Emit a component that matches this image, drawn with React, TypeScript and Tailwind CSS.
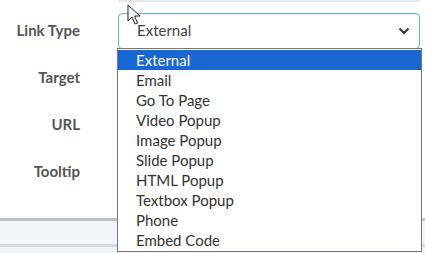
import React from "react";

const options = [
  "External",
  "Email",
  "Go To Page",
  "Video Popup",
  "Image Popup",
  "Slide Popup",
  "HTML Popup",
  "Textbox Popup",
  "Phone",
  "Embed Code",
];

const labels = ["Link Type", "Target", "URL", "Tooltip"];

const App: React.FC = () => {
  return (
    <div className="relative w-[425px] h-[253px] overflow-hidden bg-[#f2f4f7] font-['Lato',sans-serif]">
      {/* panneau du formulaire */}
      <div className="h-[221px] bg-white border-b-[3px] border-[#bcc4ca]">
        <div className="ml-[118px] mr-[5px] h-[2px] bg-[#e4e7eb]" />
        <div className="flex flex-col pt-[5px]">
          {labels.map((label, i) => (
            <div key={label} className="flex items-center h-[47px]">
              <div className="w-[80px] text-right text-[15px] font-bold text-[#555]">
                {label}
              </div>
              {i === 0 && (
                <div className="ml-[38px] w-[302px] h-[36px] flex items-center justify-between pl-[18px] pr-[9px] rounded-[4px] border border-[#66afe9] shadow-[inset_0_1px_2px_rgba(0,0,0,0.1)] text-[15px] text-[#444]">
                  <span>External</span>
                  <svg width="12" height="8" viewBox="0 0 12 8">
                    <path d="M1.5 1.5 L6 6 L10.5 1.5" fill="none" stroke="#333" strokeWidth="2" />
                  </svg>
                </div>
              )}
            </div>
          ))}
        </div>
      </div>
      <div className="h-[23px]" />
      <div className="h-[3px] bg-[#d3dce2]" />

      {/* liste deroulante ouverte */}
      <div className="absolute left-[117px] top-[48px] w-[305px] border border-[#767676] bg-white py-[1px]">
        {options.map((opt, i) => (
          <div
            key={opt}
            className={
              i === 0
                ? "h-[20px] leading-[20px] pl-[18px] text-[15px] bg-[#1967d2] text-white"
                : "h-[20px] leading-[20px] pl-[18px] text-[15px] text-[#333]"
            }
          >
            {opt}
          </div>
        ))}
      </div>

      {/* curseur */}
      <svg className="absolute left-[127px] top-[4px]" width="14" height="22" viewBox="0 0 14 22">
        <path d="M1 1 L1 17 L5 13 L8 20 L10.5 19 L7.5 12 L13 12 Z" fill="white" stroke="#222" strokeWidth="1" />
      </svg>
    </div>
  );
};

export default App;
